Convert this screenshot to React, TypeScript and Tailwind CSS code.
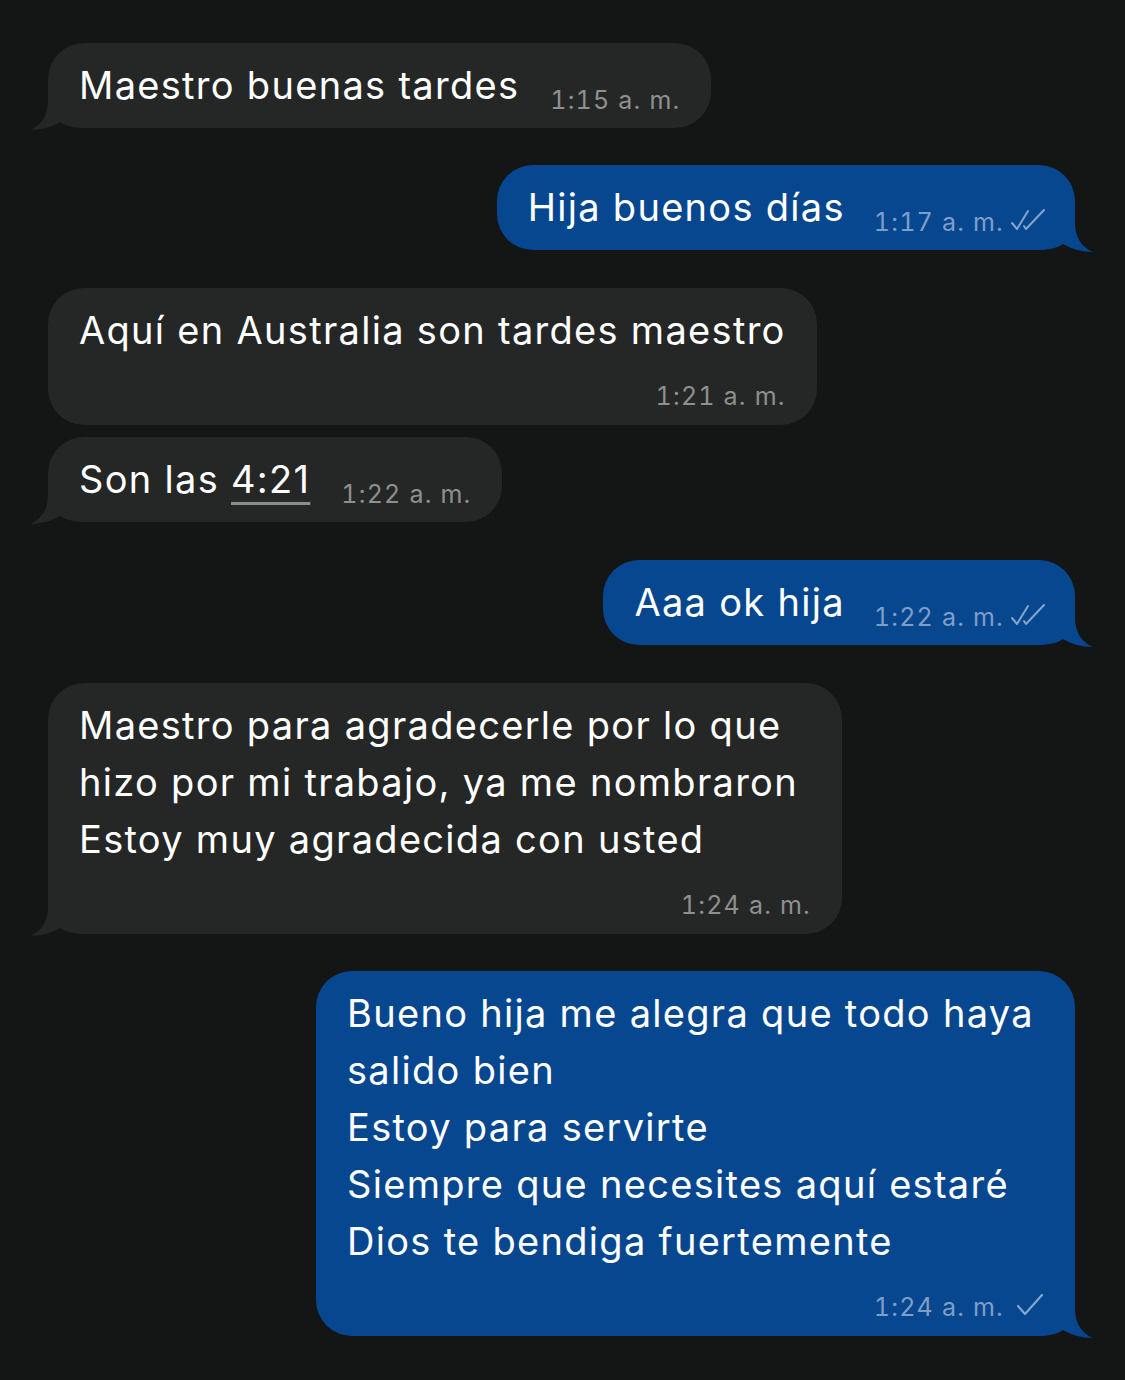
import type { ReactNode } from "react";

const IN_BG = "#252626";
const OUT_BG = "#07478f";

const Tail = ({ out }: { out?: boolean }) => (
    <svg
        width="60"
        height="42"
        viewBox="0 0 60 42"
        className={
            out
                ? "absolute right-[-18px] bottom-[-2px] -scale-x-100"
                : "absolute left-[-18px] bottom-[-2px]"
        }
    >
        <path
            d="M18 0 L18 12 C18 27 12 37 0 42 C10 42 22 39 30 34 C36 38 44 40 58 40 L58 0 Z"
            fill={out ? OUT_BG : IN_BG}
        />
    </svg>
);

const Checks = ({ double }: { double?: boolean }) => (
    <svg width="36" height="24" viewBox="0 0 36 24" className="inline-block ml-[6px] align-[-2px]">
        {double ? (
            <>
                <path d="M2 14 L7 20 L18 2" fill="none" stroke="#86a5cc" strokeWidth="2" strokeLinecap="round" strokeLinejoin="round" />
                <path d="M14 17 L16 20 L34 1" fill="none" stroke="#86a5cc" strokeWidth="2" strokeLinecap="round" strokeLinejoin="round" />
            </>
        ) : (
            <path d="M8 12 L15 20 L32 1" fill="none" stroke="#86a5cc" strokeWidth="2.2" strokeLinecap="round" strokeLinejoin="round" />
        )}
    </svg>
);

const Stamp = ({ time, out, ticks }: { time: string; out?: boolean; ticks?: "one" | "two" }) => (
    <span
        className={`whitespace-nowrap text-[25px] leading-[30px] tracking-[1.2px] tabular-nums ${
            out ? "text-[#7f9ec7]" : "text-[#8e8f8f]"
        }`}
    >
        {time}
        {ticks && <Checks double={ticks === "two"} />}
    </span>
);

interface BubbleProps {
    out?: boolean;
    tail?: boolean;
    time: string;
    ticks?: "one" | "two";
    lines?: ReactNode[];
    short?: ReactNode;
    width?: string;
}

const Bubble = ({ out, tail = true, time, ticks, lines, short, width = "" }: BubbleProps) => (
    <div
        className={`relative rounded-[36px] ${out ? "self-end" : "self-start"} ${width}`}
        style={{ backgroundColor: out ? OUT_BG : IN_BG }}
    >
        {tail && <Tail out={out} />}
        <div className={`relative pt-[14px] ${out ? "pl-[31px] pr-[29px]" : "px-[31px]"}`}>
            {short ? (
                <div className="flex items-baseline pb-[14px] whitespace-nowrap text-[38px] leading-[57px] tracking-[1.3px] text-white">
                    <span>{short}</span>
                    <span className={`${out ? "ml-[29px]" : "ml-[31px]"} translate-y-[10px] leading-[0]`}>
                        <Stamp time={time} out={out} ticks={ticks} />
                    </span>
                </div>
            ) : (
                <>
                    <div className="text-[38px] leading-[57px] tracking-[1.3px] text-white whitespace-nowrap">
                        {lines?.map((l, i) => (
                            <div key={i}>{l}</div>
                        ))}
                    </div>
                    <div className="flex justify-end mt-[22px] pb-[14px]">
                        <Stamp time={time} out={out} ticks={ticks} />
                    </div>
                </>
            )}
        </div>
    </div>
);

export default function App() {
    return (
        <div
            className="w-[1125px] h-[1380px] bg-[#141515] overflow-hidden"
            style={{ fontFamily: "Inter, 'Noto Sans', sans-serif" }}
        >
            <div className="flex flex-col pt-[43px] pl-[48px] pr-[50px]">
                <Bubble short="Maestro buenas tardes" time="1:15 a. m." />
                <div className="h-[37px]" />
                <Bubble out short="Hija buenos días" time="1:17 a. m." ticks="two" />
                <div className="h-[38px]" />
                <Bubble tail={false} lines={["Aquí en Australia son tardes maestro"]} time="1:21 a. m." />
                <div className="h-[12px]" />
                <Bubble
                    short={
                        <>
                            Son las{" "}
                            <span className="underline decoration-[#8b8c8c] decoration-[3px] underline-offset-[9px]">4:21</span>
                        </>
                    }
                    time="1:22 a. m."
                />
                <div className="h-[38px]" />
                <Bubble out short="Aaa ok hija" time="1:22 a. m." ticks="two" />
                <div className="h-[38px]" />
                <Bubble
                    width="w-[794px]"
                    lines={[
                        "Maestro para agradecerle por lo que",
                        "hizo por mi trabajo, ya me nombraron",
                        "Estoy muy agradecida con usted",
                    ]}
                    time="1:24 a. m."
                />
                <div className="h-[37px]" />
                <Bubble
                    out
                    width="w-[759px]"
                    lines={[
                        "Bueno hija me alegra que todo haya",
                        "salido bien",
                        "Estoy para servirte",
                        "Siempre que necesites aquí estaré",
                        "Dios te bendiga fuertemente",
                    ]}
                    time="1:24 a. m."
                    ticks="one"
                />
            </div>
        </div>
    );
}
